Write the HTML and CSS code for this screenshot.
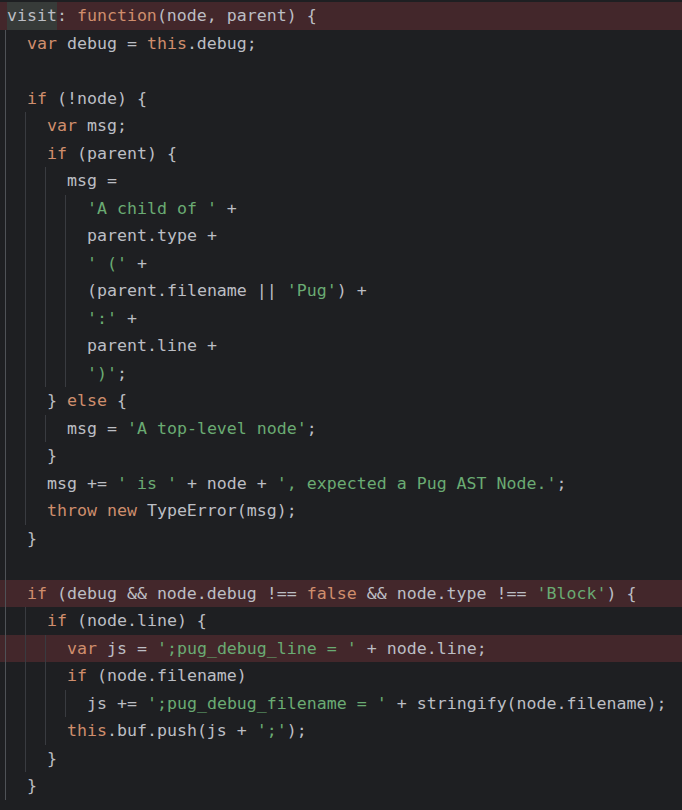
FILE: index.html
```html
<!DOCTYPE html>
<html>
<head>
<meta charset="utf-8">
<link rel="stylesheet" href="styles.css">
</head>
<body>
<div class="editor">
  <div class="ln bp"><span class="code"><span class="word">visit</span>: <span class="k">function</span>(node, parent) {</span></div>
  <div class="ln"><span class="g g0"></span><span class="code"><span class="k">var</span> debug = <span class="k">this</span>.debug;</span></div>
  <div class="ln"><span class="g g0"></span><span class="code"></span></div>
  <div class="ln"><span class="g g0"></span><span class="code"><span class="k">if</span> (!node) {</span></div>
  <div class="ln"><span class="g g0"></span><span class="g"></span><span class="code"><span class="k">var</span> msg;</span></div>
  <div class="ln"><span class="g g0"></span><span class="g"></span><span class="code"><span class="k">if</span> (parent) {</span></div>
  <div class="ln"><span class="g g0"></span><span class="g"></span><span class="g"></span><span class="code">msg =</span></div>
  <div class="ln"><span class="g g0"></span><span class="g"></span><span class="g"></span><span class="g"></span><span class="code"><span class="s">'A child of '</span> +</span></div>
  <div class="ln"><span class="g g0"></span><span class="g"></span><span class="g"></span><span class="g"></span><span class="code">parent.type +</span></div>
  <div class="ln"><span class="g g0"></span><span class="g"></span><span class="g"></span><span class="g"></span><span class="code"><span class="s">' ('</span> +</span></div>
  <div class="ln"><span class="g g0"></span><span class="g"></span><span class="g"></span><span class="g"></span><span class="code">(parent.filename || <span class="s">'Pug'</span>) +</span></div>
  <div class="ln"><span class="g g0"></span><span class="g"></span><span class="g"></span><span class="g"></span><span class="code"><span class="s">':'</span> +</span></div>
  <div class="ln"><span class="g g0"></span><span class="g"></span><span class="g"></span><span class="g"></span><span class="code">parent.line +</span></div>
  <div class="ln"><span class="g g0"></span><span class="g"></span><span class="g"></span><span class="g"></span><span class="code"><span class="s">')'</span>;</span></div>
  <div class="ln"><span class="g g0"></span><span class="g"></span><span class="code">} <span class="k">else</span> {</span></div>
  <div class="ln"><span class="g g0"></span><span class="g"></span><span class="g"></span><span class="code">msg = <span class="s">'A top-level node'</span>;</span></div>
  <div class="ln"><span class="g g0"></span><span class="g"></span><span class="code">}</span></div>
  <div class="ln"><span class="g g0"></span><span class="g"></span><span class="code">msg += <span class="s">' is '</span> + node + <span class="s">', expected a Pug AST Node.'</span>;</span></div>
  <div class="ln"><span class="g g0"></span><span class="g"></span><span class="code"><span class="k">throw new</span> TypeError(msg);</span></div>
  <div class="ln"><span class="g g0"></span><span class="code">}</span></div>
  <div class="ln"><span class="g g0"></span><span class="code"></span></div>
  <div class="ln bp"><span class="g g0"></span><span class="code"><span class="k">if</span> (debug &amp;&amp; node.debug !== <span class="k">false</span> &amp;&amp; node.type !== <span class="s">'Block'</span>) {</span></div>
  <div class="ln"><span class="g g0"></span><span class="g"></span><span class="code"><span class="k">if</span> (node.line) {</span></div>
  <div class="ln bp"><span class="g g0"></span><span class="g"></span><span class="g"></span><span class="code"><span class="k">var</span> js = <span class="s">';pug_debug_line = '</span> + node.line;</span></div>
  <div class="ln"><span class="g g0"></span><span class="g"></span><span class="g"></span><span class="code"><span class="k">if</span> (node.filename)</span></div>
  <div class="ln"><span class="g g0"></span><span class="g"></span><span class="g"></span><span class="g"></span><span class="code">js += <span class="s">';pug_debug_filename = '</span> + stringify(node.filename);</span></div>
  <div class="ln"><span class="g g0"></span><span class="g"></span><span class="g"></span><span class="code"><span class="k">this</span>.buf.push(js + <span class="s">';'</span>);</span></div>
  <div class="ln"><span class="g g0"></span><span class="g"></span><span class="code">}</span></div>
  <div class="ln"><span class="g g0"></span><span class="code">}</span></div>
</div>
</body>
</html>
```
FILE: styles.css
```css
html, body {
  margin: 0;
  padding: 0;
  background: #1e1f22;
}
.editor {
  padding-top: 2px;
  height: 808px;
  overflow: hidden;
  background: #1e1f22;
  color: #bcbec4;
  font-family: "DejaVu Sans Mono", "Liberation Mono", monospace;
  font-size: 16.6px;
}
.ln {
  display: flex;
  height: 27.5px;
  padding-left: 5px;
}
.ln.bp {
  background: #43272b;
}
.g {
  flex: none;
  width: 20px;
  box-sizing: border-box;
  border-left: 1px solid #393b40;
}
.g.g0 {
  border-left-color: #4f5257;
}
.code {
  margin-left: 2px;
  white-space: pre;
  line-height: 27.5px;
}
.word {
  display: inline-block;
  height: 27.5px;
  background: #373b39;
}
.k {
  color: #cf8e6d;
}
.s {
  color: #6aab73;
}
```
